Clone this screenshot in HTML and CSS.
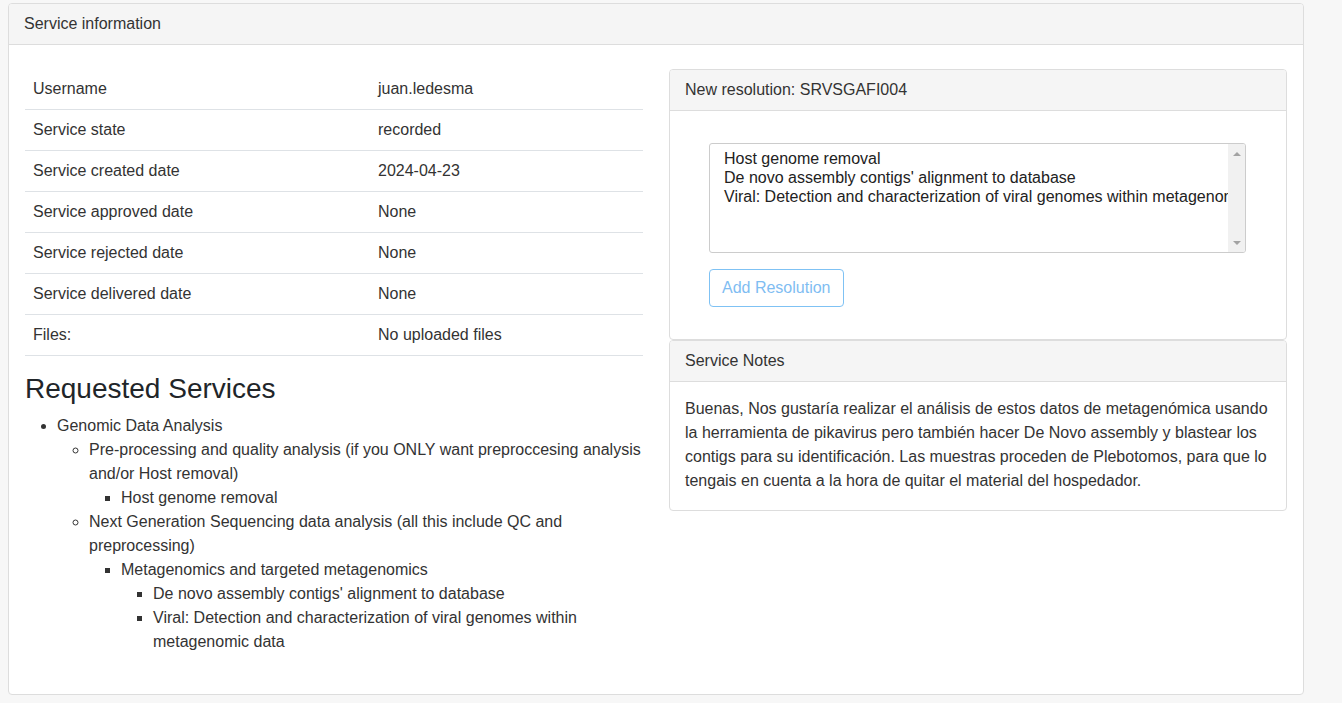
FILE: index.html
```html
<!DOCTYPE html>
<html lang="en">
<head>
<meta charset="utf-8">
<title>Service information</title>
<link rel="stylesheet" href="styles.css">
</head>
<body>
<div class="page">
  <div class="panel outer">
    <div class="panel-heading">Service information</div>
    <div class="outer-body">
      <div class="col">
        <table class="info">
          <tbody>
            <tr><td class="lbl">Username</td><td>juan.ledesma</td></tr>
            <tr><td class="lbl">Service state</td><td>recorded</td></tr>
            <tr><td class="lbl">Service created date</td><td>2024-04-23</td></tr>
            <tr><td class="lbl">Service approved date</td><td>None</td></tr>
            <tr><td class="lbl">Service rejected date</td><td>None</td></tr>
            <tr><td class="lbl">Service delivered date</td><td>None</td></tr>
            <tr><td class="lbl">Files:</td><td>No uploaded files</td></tr>
          </tbody>
        </table>
        <h3 class="req-title">Requested Services</h3>
        <ul class="tree">
          <li>Genomic Data Analysis
            <ul>
              <li>Pre-processing and quality analysis (if you ONLY want preproccesing analysis and/or Host removal)
                <ul>
                  <li>Host genome removal</li>
                </ul>
              </li>
              <li>Next Generation Sequencing data analysis (all this include QC and preprocessing)
                <ul>
                  <li>Metagenomics and targeted metagenomics
                    <ul>
                      <li>De novo assembly contigs' alignment to database</li>
                      <li>Viral: Detection and characterization of viral genomes within metagenomic data</li>
                    </ul>
                  </li>
                </ul>
              </li>
            </ul>
          </li>
        </ul>
      </div>
      <div class="col">
        <div class="panel">
          <div class="panel-heading">New resolution: SRVSGAFI004</div>
          <div class="panel-body">
            <form class="res-form">
              <div class="listbox">
                <div class="options">
                  <div class="opt">Host genome removal</div>
                  <div class="opt">De novo assembly contigs' alignment to database</div>
                  <div class="opt">Viral: Detection and characterization of viral genomes within metagenomic data</div>
                </div>
                <div class="scrollbar">
                  <span class="arrow up"></span>
                  <span class="arrow down"></span>
                </div>
              </div>
              <button type="button" class="btn-res">Add Resolution</button>
            </form>
          </div>
        </div>
        <div class="panel notes">
          <div class="panel-heading">Service Notes</div>
          <div class="panel-body">
            <p class="note-text">Buenas, Nos gustaría realizar el análisis de estos datos de metagenómica usando la herramienta de pikavirus pero también hacer De Novo assembly y blastear los contigs para su identificación. Las muestras proceden de Plebotomos, para que lo tengais en cuenta a la hora de quitar el material del hospedador.</p>
          </div>
        </div>
      </div>
    </div>
  </div>
</div>
</body>
</html>
```
FILE: styles.css
```css
* { box-sizing: border-box; }
html, body {
  margin: 0;
  padding: 0;
  background: #f7f7f7;
}
body {
  font-family: "Liberation Sans", Arial, Helvetica, sans-serif;
  font-size: 16px;
  line-height: 24px;
  color: #333;
}
.page {
  padding: 3px 38px 8px 8px;
}
.panel {
  background: #fff;
  border: 1px solid #ddd;
  border-radius: 4px;
}
.panel-heading {
  background: #f5f5f5;
  border-bottom: 1px solid #ddd;
  border-radius: 3px 3px 0 0;
  padding: 10px 15px;
  line-height: 20px;
}
.outer {
  width: 1296px;
}
.outer-body {
  display: flex;
  gap: 26px;
  padding: 24px 16px 24px 16px;
}
.col {
  flex: 1 1 0;
  min-width: 0;
}
.info {
  width: 100%;
  border-collapse: collapse;
  margin-bottom: 16px;
}
.info td {
  padding: 8px 8px;
  border-bottom: 1px solid #dee2e6;
  vertical-align: top;
}
.info td.lbl {
  width: 345px;
}
.req-title {
  font-size: 28px;
  font-weight: 400;
  line-height: 1.2;
  margin: 0 0 8px;
  color: #212529;
}
.tree {
  margin: 0 0 16px;
  padding-left: 32px;
}
.tree ul {
  margin: 0;
  padding-left: 32px;
}
.panel-body {
  padding: 15px;
}
.res-form {
  margin: 0;
  padding: 17px 25px 17px 24px;
}
.listbox {
  display: flex;
  height: 110px;
  border: 1px solid #ccc;
  border-radius: 3px;
  overflow: hidden;
  margin-bottom: 16px;
}
.options {
  flex: 1 1 auto;
  min-width: 0;
  padding: 5px 0 0 14px;
  overflow: hidden;
  white-space: nowrap;
  line-height: 19px;
  color: #222;
}
.scrollbar {
  flex: 0 0 17px;
  background: #f1f1f1;
  display: flex;
  flex-direction: column;
  justify-content: space-between;
  align-items: center;
  padding: 8px 0 7px;
}
.arrow {
  width: 0;
  height: 0;
  border-left: 4px solid transparent;
  border-right: 4px solid transparent;
}
.arrow.up { border-bottom: 4px solid #a3a3a3; }
.arrow.down { border-top: 4px solid #a3a3a3; }
.btn-res {
  display: block;
  height: 38px;
  padding: 0 12px;
  font-family: inherit;
  font-size: 16px;
  line-height: 36px;
  color: #7fbdf2;
  background: #fff;
  border: 1px solid #7fc2f4;
  border-radius: 4px;
}
.notes .panel-body {
  padding: 15px 15px 17px 15px;
}
.note-text {
  margin: 0;
}
```
